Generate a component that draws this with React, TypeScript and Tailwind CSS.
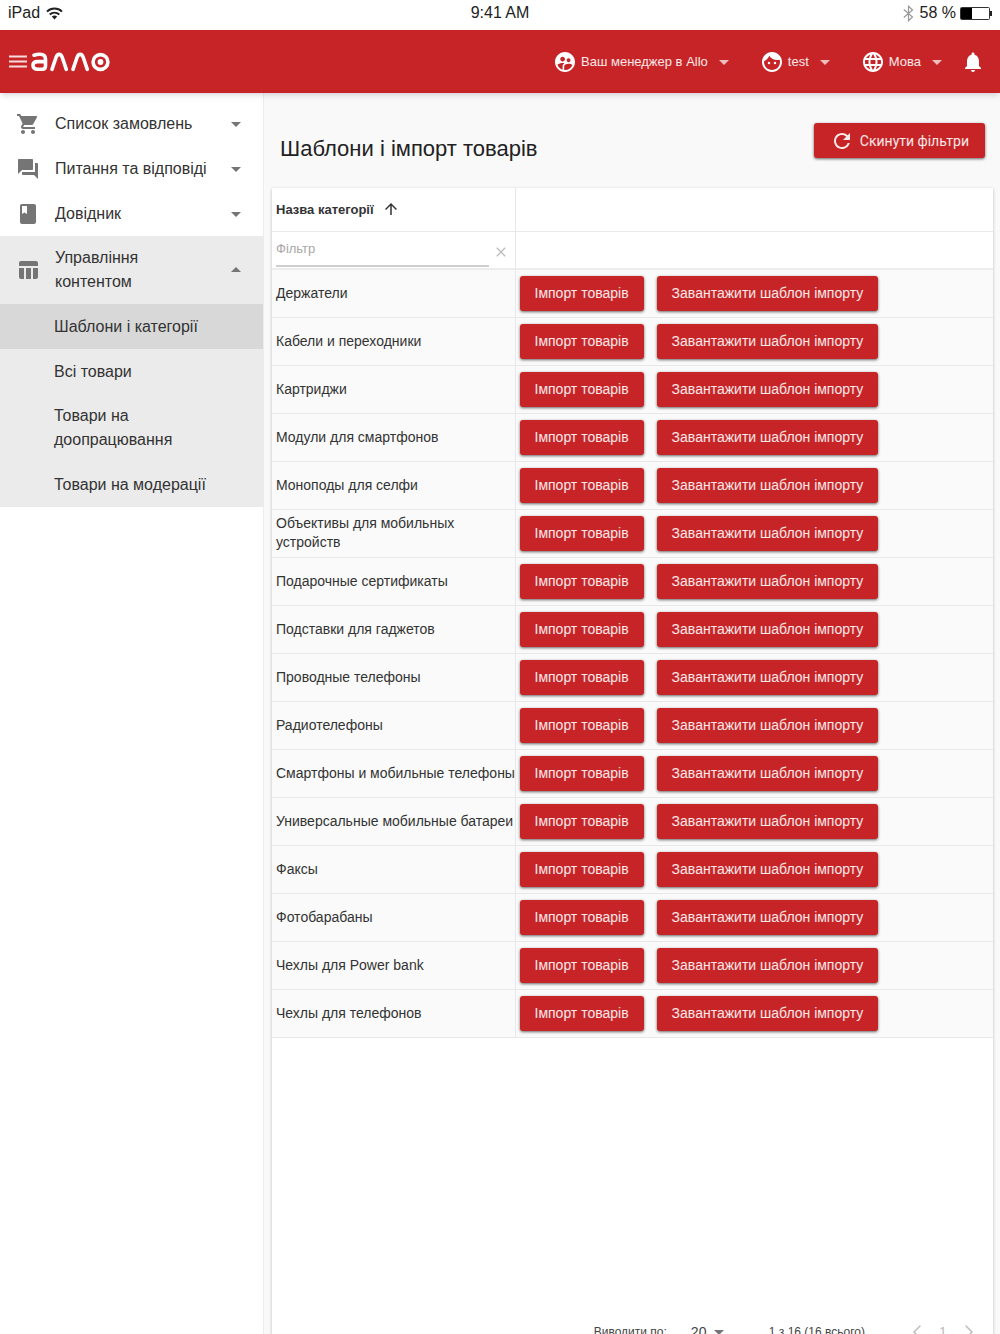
import type { ReactNode } from "react";
import type { IconType } from "react-icons";
import { ChevronLeft, ChevronRight } from "lucide-react";
import {
  MdArrowDropDown,
  MdArrowDropUp,
  MdArrowUpward,
  MdBook,
  MdClose,
  MdFace,
  MdLanguage,
  MdNotifications,
  MdQuestionAnswer,
  MdRefresh,
  MdShoppingCart,
  MdSupervisedUserCircle,
  MdTableChart,
} from "react-icons/md";

// names are printed as is, long ones carry their own line break
const categories = [
  "Держатели",
  "Кабели и переходники",
  "Картриджи",
  "Модули для смартфонов",
  "Моноподы для селфи",
  "Объективы для мобильных\nустройств",
  "Подарочные сертификаты",
  "Подставки для гаджетов",
  "Проводные телефоны",
  "Радиотелефоны",
  "Смартфоны и мобильные телефоны",
  "Универсальные мобильные батареи",
  "Факсы",
  "Фотобарабаны",
  "Чехлы для Power bank",
  "Чехлы для телефонов",
];

const contentLinks = [
  { label: "Шаблони і категорії", active: true },
  { label: "Всі товари", active: false },
  { label: "Товари на доопрацювання", active: false },
  { label: "Товари на модерації", active: false },
];

function StatusBar() {
  return (
    <div className="grid h-[30px] shrink-0 grid-cols-3 items-start bg-white px-2 pt-0.5 text-base leading-[22px] text-[#222]">
      <div className="flex items-center gap-1.5">
        iPad
        <svg width="17" height="13" viewBox="0 0 17 13" fill="none" stroke="#222">
          <path d="M1 4.6C5.200 0.600 11.800 0.600 16 4.600" strokeWidth="2" />
          <path d="M3.700 7.600C6.500 5 10.500 5 13.300 7.600" strokeWidth="2" />
          <path d="M5.800 9.600C7.400 8.200 9.600 8.200 11.200 9.600L8.500 12.500Z" fill="#222" stroke="none" />
        </svg>
      </div>
      <div className="text-center">9:41 AM</div>
      <div className="flex items-center justify-end gap-1">
        <svg width="13" height="17" viewBox="0 0 13 17" fill="none" stroke="#999" strokeWidth="1.2">
          <path d="M0.800 4.500L9.500 12L5.500 15.800V1.200L9.500 5L0.800 12.500" />
        </svg>
        <span>58 %</span>
        <svg width="32" height="13" viewBox="0 0 32 13">
          <rect x="0.500" y="0.500" width="29" height="12" rx="1" fill="#fff" stroke="#333" />
          <rect x="1" y="1" width="11" height="11" fill="#000" />
          <rect x="30" y="4" width="2" height="5" fill="#222" />
        </svg>
      </div>
    </div>
  );
}

function Logo() {
  return (
    <svg width="80" height="20" viewBox="0 0 80 20" fill="none" stroke="#fff" strokeWidth="3.600" strokeLinecap="round" role="img" aria-label="алло">
      <path d="M3 3.200C5 2.500 7 2.300 9 2.300C13 2.300 14.500 4 14.500 7V14C14.500 16.300 13.500 17.200 11.500 17.200H6.500C3.500 17.200 2 15.600 2 13.300C2 11 3.500 9.600 6.500 9.600H14" />
      <path d="M21 17.300L25 5.500C26.500 1.300 29.800 1.300 31.300 5.500L35.300 17.300" />
      <path d="M42 17.300L46 5.500C47.500 1.300 50.800 1.300 52.300 5.500L56.300 17.300" />
      <circle cx="69.500" cy="10" r="7.400" />
      <circle cx="69.500" cy="10" r="2.900" fill="#fff" stroke="none" />
    </svg>
  );
}

function HeaderMenu({ icon: Icon, children }: { icon: IconType; children: ReactNode }) {
  return (
    <button type="button" className="flex items-center gap-1 text-[13px] text-white/90">
      <Icon size={24} className="text-white" />
      {children}
      <MdArrowDropDown size={24} className="text-white/70" />
    </button>
  );
}

function Header() {
  return (
    <header className="z-10 flex h-[63px] shrink-0 items-center justify-between bg-[#c62427] pr-[15px] pl-2 shadow-md">
      <div className="flex items-center gap-1">
        <button type="button" aria-label="Меню">
          <svg width="19" height="13" viewBox="0 0 19 13" stroke="#f8dcdc" strokeWidth="2">
            <path d="M1 1.500H19M1 6.500H19M1 11.500H19" />
          </svg>
        </button>
        <Logo />
      </div>
      <div className="flex items-center gap-6">
        <HeaderMenu icon={MdSupervisedUserCircle}>Ваш менеджер в Allo</HeaderMenu>
        <HeaderMenu icon={MdFace}>test</HeaderMenu>
        <HeaderMenu icon={MdLanguage}>Мова</HeaderMenu>
        <button type="button" aria-label="Сповіщення" className="-ml-3 text-white">
          <MdNotifications size={24} />
        </button>
      </div>
    </header>
  );
}

function SideGroup({ icon: Icon, label, open = false }: { icon: IconType; label: string; open?: boolean }) {
  const Arrow = open ? MdArrowDropUp : MdArrowDropDown;
  return (
    <button
      type="button"
      aria-expanded={open}
      className="flex min-h-[45px] w-full items-center gap-[15px] py-[10px] pr-[15px] pl-4 text-left text-base text-[#333]"
    >
      <Icon size={24} className="shrink-0 text-[#757575]" />
      <span className="flex-1">{label}</span>
      <Arrow size={24} className="shrink-0 text-[#757575]" />
    </button>
  );
}

function Sidebar() {
  return (
    <nav className="w-[264px] shrink-0 border-r border-[#ececec] bg-white pt-2">
      <SideGroup icon={MdShoppingCart} label="Список замовлень" />
      <SideGroup icon={MdQuestionAnswer} label="Питання та відповіді" />
      <SideGroup icon={MdBook} label="Довідник" />
      <div className="bg-[#ebebeb]">
        <SideGroup icon={MdTableChart} label="Управління контентом" open />
        <ul>
          {contentLinks.map((link) => (
            <li key={link.label} className={link.active ? "bg-[#d8d8d8]" : ""}>
              <a href="#" className="flex min-h-[45px] items-center py-[10px] pr-14 pl-[54px] text-base text-[#333]">
                {link.label}
              </a>
            </li>
          ))}
        </ul>
      </div>
    </nav>
  );
}

function RedButton({ children }: { children: ReactNode }) {
  return (
    <button
      type="button"
      className="flex h-[35px] items-center rounded-[3px] bg-[#c62427] px-[15px] text-sm whitespace-nowrap text-white/90 shadow-[0_1px_3px_rgba(0,0,0,0.6)]"
    >
      {children}
    </button>
  );
}

function CategoryTable() {
  return (
    <table className="w-full table-fixed border-collapse text-sm leading-[19px] text-[#333]">
      <colgroup>
        <col className="w-[243px]" />
        <col />
      </colgroup>
      <thead>
        <tr className="h-[43px] border-b border-[#e8e8e8]">
          <th scope="col" className="border-r border-[#e8e8e8] px-1 text-left text-[13px] font-bold">
            <span className="flex items-center gap-2">
              Назва категорії
              <MdArrowUpward size={18} />
            </span>
          </th>
          <td />
        </tr>
        <tr className="h-[38px] border-b-2 border-[#ececec]">
          <td className="border-r border-[#e8e8e8] pr-1.5 pl-1">
            <div className="flex items-center gap-1">
              <input
                type="text"
                aria-label="Фільтр"
                placeholder="Фільтр"
                className="h-[35px] min-w-0 flex-1 border-b-2 border-[#cfcfcf] text-[13px] outline-none placeholder:text-[#a8a8a8]"
              />
              <button type="button" aria-label="Очистити" className="pt-1 text-[#bdbdbd]">
                <MdClose size={16} />
              </button>
            </div>
          </td>
          <td />
        </tr>
      </thead>
      <tbody>
        {categories.map((name) => (
          <tr key={name} className="h-12 border-b border-[#e8e8e8] bg-[#fafafa]">
            <td className="border-r border-[#e8e8e8] pl-1 whitespace-pre">{name}</td>
            <td className="pl-1">
              <div className="flex gap-[13px]">
                <RedButton>Імпорт товарів</RedButton>
                <RedButton>Завантажити шаблон імпорту</RedButton>
              </div>
            </td>
          </tr>
        ))}
      </tbody>
    </table>
  );
}

function Pager() {
  return (
    <div className="flex h-14 shrink-0 items-center justify-end pr-3 text-[12px] text-[#444]">
      <label htmlFor="page-size">Виводити по:</label>
      <div className="ml-6 flex items-center">
        <select id="page-size" defaultValue="20" className="appearance-none bg-transparent text-sm">
          <option>20</option>
        </select>
        <MdArrowDropDown size={24} className="text-[#757575]" />
      </div>
      <span className="ml-[38px]">1 з 16 (16 всього)</span>
      <div className="ml-10 flex items-center text-sm text-[#bdbdbd]">
        <button type="button" aria-label="Назад">
          <ChevronLeft size={24} strokeWidth={1.5} />
        </button>
        <span className="w-7 text-center">1</span>
        <button type="button" aria-label="Вперед">
          <ChevronRight size={24} strokeWidth={1.5} />
        </button>
      </div>
    </div>
  );
}

export default function App() {
  return (
    <div className="flex h-screen flex-col overflow-hidden font-['Liberation_Sans',Arial,sans-serif]">
      <StatusBar />
      <Header />
      <div className="flex min-h-0 flex-1">
        <Sidebar />
        <main className="min-w-0 flex-1 bg-[#f9f9f9] pr-[7px] pl-2">
          <div className="flex h-[95px] items-center justify-between pr-2 pl-2">
            <h1 className="pt-4 text-[22px] text-[#222]">Шаблони і імпорт товарів</h1>
            <button
              type="button"
              className="flex h-[35px] items-center gap-1.5 rounded-[3px] bg-[#c62427] px-4 font-[Roboto,sans-serif] text-sm text-white/90 shadow-[0_1px_3px_rgba(0,0,0,0.6)]"
            >
              <MdRefresh size={24} />
              Скинути фільтри
            </button>
          </div>
          {/* the pager runs past the lower edge of the screen */}
          <section className="flex h-[calc(100vh-162px)] flex-col bg-white shadow-[0_1px_3px_rgba(0,0,0,0.25)]">
            <div className="flex-1">
              <CategoryTable />
            </div>
            <Pager />
          </section>
        </main>
      </div>
    </div>
  );
}
